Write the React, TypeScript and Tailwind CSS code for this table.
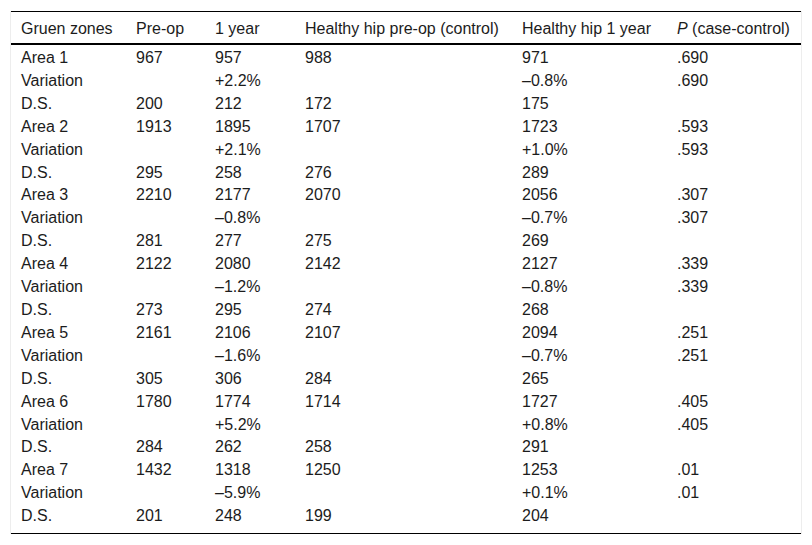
const header = ['Gruen zones', 'Pre-op', '1 year', 'Healthy hip pre-op (control)', 'Healthy hip 1 year']

const rows: string[][] = [
  ['Area 1', '967', '957', '988', '971', '.690'],
  ['Variation', '', '+2.2%', '', '–0.8%', '.690'],
  ['D.S.', '200', '212', '172', '175', ''],
  ['Area 2', '1913', '1895', '1707', '1723', '.593'],
  ['Variation', '', '+2.1%', '', '+1.0%', '.593'],
  ['D.S.', '295', '258', '276', '289', ''],
  ['Area 3', '2210', '2177', '2070', '2056', '.307'],
  ['Variation', '', '–0.8%', '', '–0.7%', '.307'],
  ['D.S.', '281', '277', '275', '269', ''],
  ['Area 4', '2122', '2080', '2142', '2127', '.339'],
  ['Variation', '', '–1.2%', '', '–0.8%', '.339'],
  ['D.S.', '273', '295', '274', '268', ''],
  ['Area 5', '2161', '2106', '2107', '2094', '.251'],
  ['Variation', '', '–1.6%', '', '–0.7%', '.251'],
  ['D.S.', '305', '306', '284', '265', ''],
  ['Area 6', '1780', '1774', '1714', '1727', '.405'],
  ['Variation', '', '+5.2%', '', '+0.8%', '.405'],
  ['D.S.', '284', '262', '258', '291', ''],
  ['Area 7', '1432', '1318', '1250', '1253', '.01'],
  ['Variation', '', '–5.9%', '', '+0.1%', '.01'],
  ['D.S.', '201', '248', '199', '204', ''],
]

export default function App() {
  return (
    <div className="min-h-[545px] w-[812px] bg-white pl-[10px] pt-[11px] font-['Liberation_Sans',Arial,sans-serif] text-[16px] text-[#1c1c1c]">
      <div className="w-[792px] border-x border-[#ededed]">
        <table className="w-full table-fixed border-collapse border-t border-black">
          <colgroup>
            <col className="w-[115px]" />
            <col className="w-[79px]" />
            <col className="w-[90px]" />
            <col className="w-[217px]" />
            <col className="w-[155px]" />
            <col className="w-[134px]" />
          </colgroup>
          <thead>
            <tr className="border-b-2 border-black">
              {header.map((h) => (
                <th key={h} className="pl-[10px] pt-[8px] pb-[6px] text-left font-normal leading-[17px] whitespace-nowrap">
                  {h}
                </th>
              ))}
              <th className="pl-[10px] pt-[8px] pb-[6px] text-left font-normal leading-[17px] whitespace-nowrap">
                <i>P</i> (case-control)
              </th>
            </tr>
          </thead>
          <tbody>
            {rows.map((r, i) => {
              const last = i === rows.length - 1
              return (
                <tr key={i} className={last ? 'border-b border-black' : ''}>
                  {r.map((c, j) => (
                    <td
                      key={j}
                      className={
                        last
                          ? 'pl-[10px] pt-[5px] pb-[8px] leading-[16.9px] whitespace-nowrap'
                          : 'pl-[10px] pt-[5px] pb-[1px] leading-[16.9px] whitespace-nowrap'
                      }
                    >
                      {c}
                    </td>
                  ))}
                </tr>
              )
            })}
          </tbody>
        </table>
      </div>
    </div>
  )
}
